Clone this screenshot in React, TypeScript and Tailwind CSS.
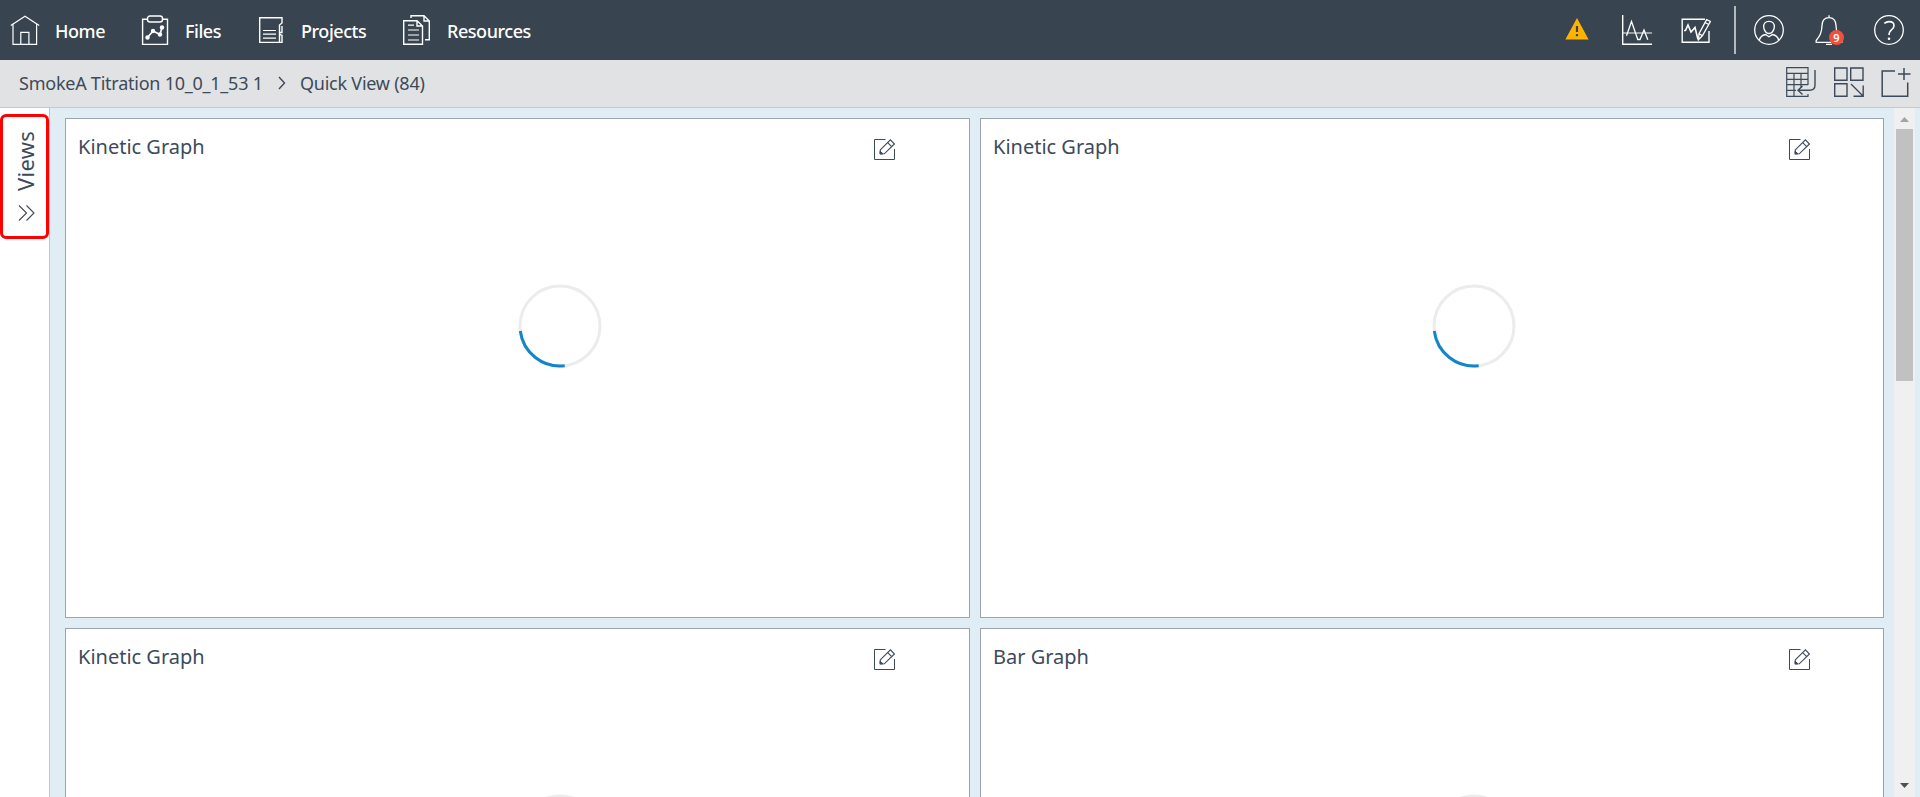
import type { ReactNode } from 'react';

function Icon({ size = 30, w = 1.2, className = '', children }: { size?: number; w?: number; className?: string; children: ReactNode }) {
  return (
    <svg width={size} height={size} viewBox={`0 0 ${size} ${size}`} fill="none" stroke="currentColor" strokeWidth={w} className={`shrink-0 ${className}`}>
      {children}
    </svg>
  );
}

const HomeIcon = () => (
  <Icon>
    <path d="M3 8.5V29.3H26.6V8.5M.8 10.6 15 1.2 29.2 10.6M10.8 29V17.4H18.9V29" />
  </Icon>
);

const FilesIcon = () => (
  <Icon>
    <path d="M7.5 4.3H2.6V29.4H27.5V4.3H22.5" strokeWidth="1.4" />
    <rect x="7.5" y="1" width="15" height="6" rx="2.5" strokeWidth="1.4" />
    <path d="M7.5 22.5 13 16 20 19.5 22 12.5" strokeWidth="1.6" />
    <g fill="currentColor" stroke="none">
      <circle cx="7.5" cy="22.5" r="2.2" />
      <circle cx="13" cy="16" r="2.2" />
      <circle cx="20" cy="19.5" r="2.2" />
      <circle cx="22" cy="12.5" r="2.2" />
    </g>
  </Icon>
);

const ProjectsIcon = () => (
  <Icon>
    <path d="M23 27.4H3.7V2.7H26V8L23.5 10V27.4H26V20.5L23.5 19V17.5H26V11" strokeWidth="1.4" />
    <path d="M7 15.5H20M7 19.2H20M7 23.2H20" />
  </Icon>
);

const ResourcesIcon = () => (
  <Icon>
    <path d="M1.7 5.7H15L20.5 11V29.2H1.7ZM15 5.7V11H20.5" strokeWidth="1.4" />
    <path d="M9 3V.8H22L27.3 6V24.7H23M22 .8V6H27.3" strokeWidth="1.4" />
    <path d="M6 10.2H12M6 15H17M6 20H17M6 25H17" />
  </Icon>
);

const nav = [
  { label: 'Home', icon: <HomeIcon />, cell: 'w-[130px]' },
  { label: 'Files', icon: <FilesIcon />, cell: 'w-[116px]' },
  { label: 'Projects', icon: <ProjectsIcon />, cell: 'w-[146px]' },
  { label: 'Resources', icon: <ResourcesIcon />, cell: 'w-[140px]' },
];

function Header() {
  return (
    <header className="flex h-[60px] shrink-0 items-center bg-[#38444f] pl-2.5 text-white">
      <nav className="flex">
        {nav.map((n) => (
          <a key={n.label} className={`flex items-center gap-[15px] ${n.cell}`}>
            {n.icon}
            <span className="pt-0.5 text-[18px] leading-[30px] font-medium tracking-[-0.45px]">{n.label}</span>
          </a>
        ))}
      </nav>
      <div className="ml-auto flex items-center pr-4">
        <svg width="24" height="22" viewBox="0 0 24 22" className="mr-[33px] mb-0.5">
          <path d="M12 0 23.6 21.5H.4Z" fill="#ffb300" />
          <path d="M10.9 8h2.2v6h-2.2zM10.9 16h2.2v2.2h-2.2z" fill="#38444f" />
        </svg>
        <Icon className="mr-[29px]">
          <path d="M.7 0V29.3H30" strokeWidth="1.4" />
          <path d="M1 18H30" strokeWidth="1.2" opacity=".8" />
          <path d="M4.5 20.8 9.5 6.5 15.8 24.5H18L22 15 25.8 24.8" strokeWidth="1.3" />
        </Icon>
        <Icon className="mr-[23px]">
          <path d="M24 4.2H1.2V27.3H28V16" strokeWidth="1.4" />
          <path d="M3 15.5H4.5L7 10 10 17 14 12.5 17 24.5" strokeWidth="1.6" />
          <path d="M25.6 4.7 29.4 6.5 21.5 20.5 17.5 24.8 18 18.8ZM18 18.8 21.5 20.5M24 7.5 27.9 9.5" strokeWidth="1.3" />
        </Icon>
        <div className="mr-[18px] h-12 w-0.5 bg-[#b4b9bd]" />
        <Icon className="mr-[31px]" w={1.3}>
          <circle cx="15" cy="15" r="14.3" />
          <path d="M15 6.3c-3.6 0-5.6 2.4-5.3 5.8.3 3.8 2.7 6.4 5.3 6.4s5-2.6 5.3-6.4c.3-3.4-1.7-5.8-5.3-5.8ZM5.2 25.4C6.1 21.6 7.5 20.3 11.5 19.5L15 21.7 18.5 19.5C22.5 20.3 23.9 21.6 24.8 25.4" />
        </Icon>
        <div className="relative mr-[29px]">
          <Icon w={1.3}>
            <path d="M14 .3V3M14 2.6C9.5 2.6 7.2 6 7 10.5 6.8 18.3 4.6 21.2 1.2 25.5V27.4H26.8V25.5C23.4 21.2 21.2 18.3 21 10.5 20.8 6 18.5 2.6 14 2.6ZM11 29.3H17" />
          </Icon>
          <span className="absolute top-[15px] left-[14px] flex size-[15px] items-center justify-center rounded-full bg-[#f0513c] text-[11px] leading-none font-semibold">9</span>
        </div>
        <Icon w={1.3}>
          <circle cx="15" cy="15" r="14.3" />
          <path d="M10.3 8.4C12 7 13.4 6.6 15.2 6.6c3 0 4.8 1.6 4.8 4.1 0 4.2-4.9 4.2-4.9 8.1V20" strokeWidth="1.6" />
          <circle cx="15" cy="23.8" r="1.3" fill="currentColor" stroke="none" />
        </Icon>
      </div>
    </header>
  );
}

function Breadcrumbs() {
  return (
    <div className="flex h-12 shrink-0 items-center border-b border-[#c6c8ca] bg-[#e1e2e3] pb-[3px] pl-[19px]">
      <span className="w-[259px] pt-0.5 text-[18px] leading-6 tracking-[-0.24px] whitespace-nowrap">SmokeA Titration 10_0_1_53 1</span>
      <svg width="8" height="14" viewBox="0 0 8 14" fill="none" stroke="currentColor" strokeWidth="1.4" className="mt-0.5 mr-[14px]">
        <path d="M1 1 6.5 7 1 13" />
      </svg>
      <span className="pt-0.5 text-[18px] leading-6 tracking-[-0.24px] whitespace-nowrap">Quick View (84)</span>
      <div className="ml-auto flex items-center pr-[9px]">
        <Icon className="mr-[18px]">
          <path d="M22 18V.7H.7V29.3H22V27M.7 6.3H22M.7 12.3H22M.7 17.7H22M.7 23.3H10M8 6.3V29M15 6.3V21" />
          <path d="M29 3V18C29 21.5 27 23.2 23.5 23.2H12M16.5 19 12 23.2 16.5 27.5" strokeWidth="1.4" />
        </Icon>
        <Icon className="mr-[17px]">
          <path d="M.7 1H13V13.3H.7ZM16.7 1H29V13.3H16.7ZM.7 16.7H13V29.3H.7Z" strokeWidth="1.4" />
          <path d="M17 17 28.5 28.5M19.5 29.2H29.2V18.5" strokeWidth="1.4" />
        </Icon>
        <Icon>
          <path d="M14 4H1.2V29.2H26.7V15.5M23 1V13M17 7H29.5" strokeWidth="1.5" />
        </Icon>
      </div>
    </div>
  );
}

function Sidebar() {
  return (
    <aside className="w-[50px] shrink-0 border-r border-[#c4c6c9] bg-white pt-1.5">
      <button className="flex h-[125px] w-[49px] flex-col items-center rounded-md border-3 border-[#ff0000] pt-[13px]">
        <span className="h-[61px] rotate-180 text-[22px] leading-[30px] tracking-[0.3px] [writing-mode:vertical-rl] whitespace-nowrap">Views</span>
        <svg width="17" height="16" viewBox="0 0 17 16" fill="none" stroke="currentColor" strokeWidth="1.1" className="mt-[14px] ml-1">
          <path d="M1 .5 8.5 8 1 15.5M8.5 .5 16 8 8.5 15.5" />
        </svg>
      </button>
    </aside>
  );
}

function Card({ title, spinnerIndent = 'ml-[451px]' }: { title: string; spinnerIndent?: string }) {
  return (
    <section className="flex h-[500px] flex-col border border-[#9ca5af] bg-white">
      <div className="flex items-start pt-[13px] pl-3">
        <h2 className="w-[796px] text-[20px] leading-[30px]">{title}</h2>
        <svg width="21" height="21" viewBox="0 0 21 21" fill="none" stroke="currentColor" className="mt-[7px]">
          <path d="M11.5 .5H.5V20.5H20.5V10" strokeWidth="1" />
          <path d="M6.3 10.8 16.4 .9 20.4 5 10.3 14.8 6.3 15ZM13.7 3.6 17.7 7.6" strokeWidth="1.1" />
          <path d="M6 12.2 9 14.8H6Z" fill="currentColor" />
        </svg>
      </div>
      <svg width="84" height="84" viewBox="0 0 84 84" fill="none" strokeWidth="3" className={`mt-[122px] ${spinnerIndent}`}>
        <circle cx="42" cy="42" r="40" stroke="#ebecec" />
        <path d="M2.3 47A40 40 0 0 0 46.7 81.7" stroke="#1385c9" />
      </svg>
    </section>
  );
}

function Scrollbar() {
  return (
    <div className="flex w-[21px] flex-col items-center bg-[#f0f0f0]">
      <svg width="9" height="5" viewBox="0 0 9 5" className="mt-[9px]">
        <path d="M4.5 0 9 5H0Z" fill="#a3a3a3" />
      </svg>
      <div className="mt-[7px] h-[252px] w-[17px] bg-[#c1c1c1]" />
      <svg width="9" height="5" viewBox="0 0 9 5" className="mt-auto mb-[9px]">
        <path d="M0 0H9L4.5 5Z" fill="#505050" />
      </svg>
    </div>
  );
}

export default function App() {
  return (
    <div className="flex h-[797px] w-[1920px] flex-col overflow-hidden bg-white font-['Noto_Sans','Open_Sans',sans-serif] text-[#3d4a5a]">
      <Header />
      <Breadcrumbs />
      <div className="flex min-h-0 flex-1">
        <Sidebar />
        <main className="flex min-w-0 flex-1 overflow-hidden bg-[#e0edf5] pr-[5px] pl-[15px]">
          <div className="mr-2.5 grid flex-1 grid-cols-[905px_904px] content-start gap-2.5 pt-2.5">
            <Card title="Kinetic Graph" spinnerIndent="ml-[452px]" />
            <Card title="Kinetic Graph" />
            <Card title="Kinetic Graph" spinnerIndent="ml-[452px]" />
            <Card title="Bar Graph" />
          </div>
          <Scrollbar />
        </main>
      </div>
    </div>
  );
}
